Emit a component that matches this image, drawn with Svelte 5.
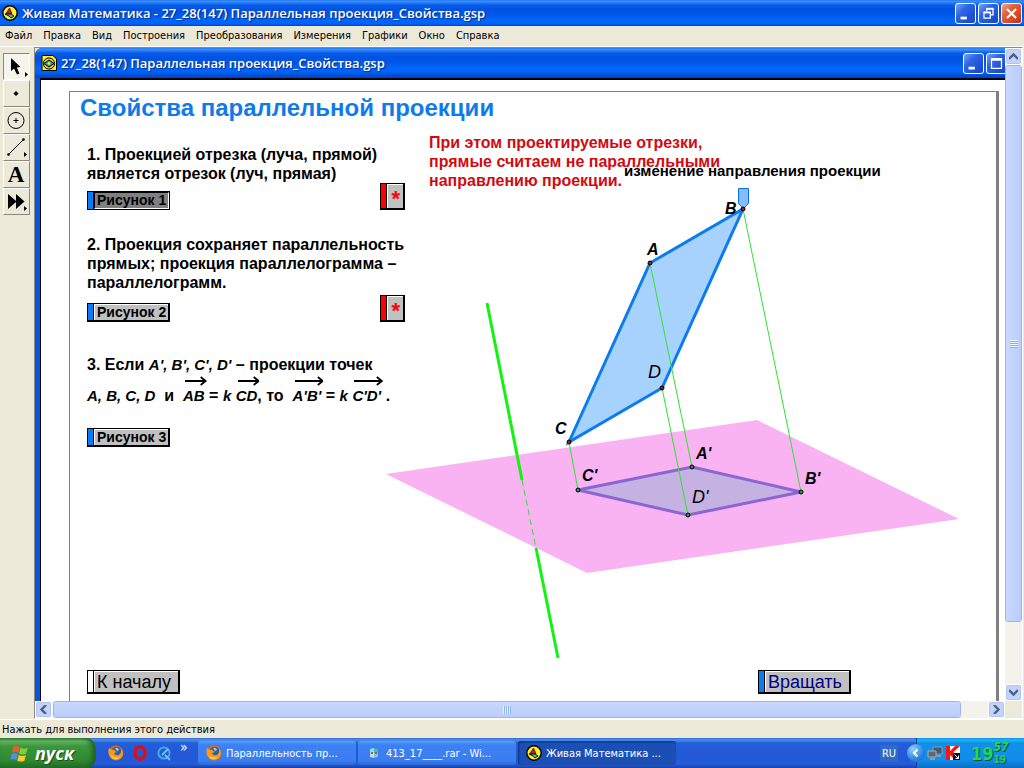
<script>
  const fileName = "27_28(147) Параллельная проекция_Свойства.gsp";

  const menu = [
    "Файл",
    "Правка",
    "Вид",
    "Построения",
    "Преобразования",
    "Измерения",
    "Графики",
    "Окно",
    "Справка",
  ];

  const tools = [
    { id: "arrow", label: "Стрелка" },
    { id: "point", label: "Точка" },
    { id: "circle", label: "Окружность" },
    { id: "segment", label: "Отрезок" },
    { id: "text", label: "Текст" },
    { id: "custom", label: "Инструменты пользователя" },
  ];

  let tool = $state("arrow");
  let figure = $state(1);

  // sketch coordinates
  const pts = {
    A: [650, 263],
    B: [743, 209],
    C: [569, 442],
    D: [662, 388],
    A1: [692, 467],
    B1: [801, 492],
    C1: [578, 490],
    D1: [688, 515],
  };

  const labels = [
    { text: "A", x: 647, y: 255 },
    { text: "B", x: 725, y: 214 },
    { text: "C", x: 555, y: 434 },
    { text: "D", x: 648, y: 378, light: true },
    { text: "A'", x: 696, y: 459 },
    { text: "B'", x: 805, y: 484 },
    { text: "C'", x: 582, y: 481 },
    { text: "D'", x: 692, y: 503, light: true },
  ];

  const poly = (...names) => names.map((n) => pts[n].join(",")).join(" ");
</script>

{#snippet appIcon()}
  <svg class="app-icon" viewBox="0 0 16 16" aria-hidden="true">
    <circle cx="8" cy="8" r="7.2" fill="#ffee2a" stroke="#000" stroke-width="1.4" />
    <path d="M7.5 3 L10 8.5 H4 Z" fill="#e01010" stroke="#000" stroke-width=".6" />
    <path d="M3 9 H9 L12 11 L9 13 L7 11 Z" fill="#27c6bb" stroke="#000" stroke-width=".9" />
  </svg>
{/snippet}

{#snippet firefox()}
  <svg class="app-icon" viewBox="0 0 16 16" aria-hidden="true">
    <circle cx="8" cy="8" r="7.4" fill="#e66a10" />
    <circle cx="8.6" cy="6.6" r="4.8" fill="#2d5ea8" />
    <path d="M7 3 Q10 2 11 5 L9 6 Z" fill="#9cd0f4" />
    <path d="M1 3 L4 5 Q7 4 7 6 L9 7 L6 8 Q7 11 11 10 Q14 8 13 3 Q17 9 13 13 Q8 17 3 13 Q-1 9 1 3 Z" fill="#f59a1c" />
    <path d="M3 10 Q6 14 12 12 Q8 16 4 13 Z" fill="#ffd34a" />
  </svg>
{/snippet}

{#snippet chevron(d)}
  <svg viewBox="0 0 9 9" width="9" height="9" aria-hidden="true">
    <path {d} fill="none" stroke="#4d6185" stroke-width="2.4" />
  </svg>
{/snippet}

{#snippet vector(text)}
  <i class="vector">
    <svg viewBox="0 0 30 10" preserveAspectRatio="xMaxYMid slice" aria-hidden="true">
      <path d="M0 5 H29 M24 1 L29 5 L24 9" fill="none" stroke="#000" stroke-width="1.8" />
    </svg>{text}</i>
{/snippet}

<div class="desktop">
  <header class="titlebar">
    {@render appIcon()}
    <h1>Живая Математика - {fileName}</h1>
    <div class="winbtns">
      <button type="button" aria-label="Свернуть">
        <svg viewBox="0 0 21 21"><path d="M5 15.5 H12" stroke="#fff" stroke-width="3" /></svg>
      </button>
      <button type="button" aria-label="Восстановить">
        <svg viewBox="0 0 21 21">
          <path d="M8.5 8 V5.5 H15.5 V12 H13" fill="none" stroke="#fff" stroke-width="1.4" />
          <path d="M8 5.2 H16" stroke="#fff" stroke-width="2" />
          <path d="M5.5 9.5 H12.5 V15.5 H5.5 Z" fill="none" stroke="#fff" stroke-width="1.4" />
          <path d="M5 9.2 H13" stroke="#fff" stroke-width="2" />
        </svg>
      </button>
      <button type="button" class="close" aria-label="Закрыть">
        <svg viewBox="0 0 21 21"><path d="M5.5 5.5 L15.5 15.5 M15.5 5.5 L5.5 15.5" stroke="#fff" stroke-width="2.4" /></svg>
      </button>
    </div>
  </header>

  <nav class="menubar">
    {#each menu as item (item)}
      <button type="button">{item}</button>
    {/each}
  </nav>

  <div class="workspace">
    <div class="toolbox">
      {#each tools as t (t.id)}
        <button
          type="button"
          aria-label={t.label}
          class:active={tool === t.id}
          onclick={() => (tool = t.id)}
        >
          <svg viewBox="0 0 25 25" aria-hidden="true">
            {#if t.id === "arrow"}
              <path d="M7 4 V17 L10 14.5 L13 20.5 L15.4 19.4 L12.8 13.4 L16.5 13 Z" />
              <path d="M21 18 L24 20.5 L21 23 Z" />
            {:else if t.id === "point"}
              <path d="M12 10 L14.6 12.5 L12 15 L9.4 12.5 Z" />
            {:else if t.id === "circle"}
              <circle cx="12" cy="12.5" r="8" fill="none" stroke="#000" />
              <path d="M12 10 V15 M9.5 12.5 H14.5" stroke="#000" />
            {:else if t.id === "segment"}
              <path d="M4.5 19.5 L19.5 4.5" stroke="#000" />
              <circle cx="4.5" cy="19.5" r="1.3" />
              <circle cx="19.5" cy="4.5" r="1.3" />
              <path d="M20 17 L23 19.5 L20 22 Z" />
            {:else if t.id === "text"}
              <text x="12" y="20" text-anchor="middle">A</text>
            {:else}
              <path d="M4 5 L12 12 V5 L20.5 12.5 L12 20 V13 L4 20 Z" />
              <path d="M20 17 L23 19.5 L20 22 Z" />
            {/if}
          </svg>
        </button>
      {/each}
    </div>

    <main class="mdi">
      <section class="child">
        <header class="titlebar inner">
          <svg class="app-icon" viewBox="0 0 16 16" aria-hidden="true">
            <path d="M1 .5 H12 L15.5 4 V15.5 H1 Z" fill="#ffee2a" stroke="#000" />
            <circle cx="8" cy="8.5" r="5.6" fill="#d8d34a" stroke="#000" />
            <path d="M3 8.5 L8 5 L13 8.5 L8 12 Z" fill="#27a69b" stroke="#000" />
            <circle cx="8" cy="8.5" r="1.4" fill="#f6e22b" />
          </svg>
          <h2>{fileName}</h2>
          <div class="winbtns">
            <button type="button" aria-label="Свернуть документ">
              <svg viewBox="0 0 21 21"><path d="M5 15.5 H12" stroke="#fff" stroke-width="3" /></svg>
            </button>
            <button type="button" aria-label="Развернуть документ">
              <svg viewBox="0 0 21 21">
                <path d="M5 5.5 H16 V16 H5 Z" fill="none" stroke="#fff" stroke-width="1.4" />
                <path d="M4.4 6 H16.6" stroke="#fff" stroke-width="3" />
              </svg>
            </button>
          </div>
        </header>

        <div class="canvas">
          <div class="paper">
            <svg class="figure" viewBox="70 92 926 609" width="926" height="609" aria-label="Параллельная проекция">
              <polygon points="386,474 757,420 959,519 587,573" fill="#f9b3f2" />
              <polygon points={poly("A", "B", "D", "C")} fill="#a8d2fe" stroke="#0a7cf0" stroke-width="3" />
              <polygon points={poly("A1", "B1", "D1", "C1")} fill="#c6b2e2" stroke="#8a66d2" stroke-width="3" />
              <g stroke="#2ee42e" stroke-width="1">
                {#each ["A", "B", "C", "D"] as n (n)}
                  <line x1={pts[n][0]} y1={pts[n][1]} x2={pts[n + "1"][0]} y2={pts[n + "1"][1]} />
                {/each}
              </g>
              <g stroke="#12f312" stroke-width="3">
                <path d="M487 303 L522 480 M536 548 L558 658" />
                <path d="M522 480 L536 548" stroke="#3fd63f" stroke-width="1" stroke-dasharray="6 4" />
              </g>
              <path d="M738.500 188.500 H748.500 V203.500 L743.500 208.500 L738.500 203.500 Z" fill="#84bcff" stroke="#0a6fe0" />
              {#each Object.entries(pts) as [name, [x, y]] (name)}
                <circle cx={x} cy={y} r="2" fill={name.length > 1 ? "#1fa02c" : "#b0101c"} stroke="#000" />
              {/each}
              {#each labels as l (l.text)}
                <text x={l.x} y={l.y} class:light={l.light}>{l.text}</text>
              {/each}
            </svg>

            <p class="note">
              При этом проектируемые отрезки,<br />
              прямые считаем не параллельными<br />
              направлению проекции.
            </p>
            <p class="caption">изменение направления проекции</p>

            <h3>Свойства параллельной проекции</h3>

            <article>
              <p>1. Проекцией отрезка (луча, прямой)<br />является отрезок (луч, прямая)</p>
              <div class="row">
                <button type="button" class="action" class:pressed={figure === 1} onclick={() => (figure = 1)}>
                  <span>Рисунок 1</span>
                </button>
                <button type="button" class="action star"><span>*</span></button>
              </div>
            </article>

            <article>
              <p>2. Проекция сохраняет параллельность<br />прямых; проекция параллелограмма –<br />параллелограмм.</p>
              <div class="row">
                <button type="button" class="action" class:pressed={figure === 2} onclick={() => (figure = 2)}>
                  <span>Рисунок 2</span>
                </button>
                <button type="button" class="action star"><span>*</span></button>
              </div>
            </article>

            <article class="vectors">
              <p>3. Если <i>A', B', C', D'</i> – проекции точек</p>
              <p>
                <i>A, B, C, D</i>&nbsp; и &nbsp;{@render vector("AB")} = <i>k</i> {@render vector("CD")}, то &nbsp;{@render vector("A'B'")} = <i>k</i> {@render vector("C'D'")} .
              </p>
              <div class="row">
                <button type="button" class="action" class:pressed={figure === 3} onclick={() => (figure = 3)}>
                  <span>Рисунок 3</span>
                </button>
              </div>
            </article>

            <footer>
              <button type="button" class="action big home"><span>К началу</span></button>
              <button type="button" class="action big rotate"><span>Вращать</span></button>
            </footer>
          </div>
        </div>
      </section>

      <div class="scroll vertical">
        <button type="button" aria-label="Вверх">{@render chevron("M0 7 L4.5 2.500 L9 7")}</button>
        <div class="track">
          <div class="thumb"><span class="grip"></span></div>
        </div>
        <button type="button" aria-label="Вниз">{@render chevron("M0 2 L4.5 6.500 L9 2")}</button>
      </div>

      <div class="scroll horizontal">
        <button type="button" aria-label="Влево">{@render chevron("M7 0 L2.500 4.500 L7 9")}</button>
        <div class="track">
          <div class="thumb"><span class="grip"></span></div>
        </div>
        <button type="button" aria-label="Вправо">{@render chevron("M2 0 L6.500 4.500 L2 9")}</button>
      </div>
    </main>
  </div>

  <div class="status">Нажать для выполнения этого действия</div>

  <footer class="taskbar">
    <button type="button" class="start">
      <svg viewBox="0 0 20 20" aria-hidden="true">
        <path d="M3.500 3 Q7 1 10 3.500 L8.500 9.500 Q5.500 7.500 2 9 Z" fill="#f0592a" />
        <path d="M11 4 Q14.500 6 18.500 4 L17 10 Q13 12 9.500 10 Z" fill="#7fd03c" />
        <path d="M1.700 10.500 Q5 8.800 8.200 11 L6.700 17 Q3.500 15 .2 16.500 Z" fill="#4e8ef5" />
        <path d="M9.200 11.500 Q13 13.500 16.700 11.500 L15.200 17.500 Q11.500 19.500 7.700 17.500 Z" fill="#fbc92a" />
      </svg>
      пуск
    </button>

    <div class="quick">
      {@render firefox()}
      <svg class="app-icon" viewBox="0 0 16 16" aria-hidden="true">
        <ellipse cx="8" cy="8" rx="5" ry="6.200" fill="none" stroke="#d8101c" stroke-width="3.600" />
      </svg>
      <svg class="app-icon" viewBox="0 0 16 16" aria-hidden="true">
        <circle cx="8" cy="8" r="5.600" fill="#1b62c8" stroke="#49a4ee" stroke-width="2" />
        <path d="M6 10 L12 4 M9 10 L14 15" stroke="#6fc3f5" stroke-width="1.800" />
      </svg>
      <span>»</span>
    </div>

    <div class="tasks">
      <button type="button">{@render firefox()}Параллельность пр...</button>
      <button type="button">
        <svg class="app-icon" viewBox="0 0 16 16" aria-hidden="true">
          <path d="M4 4 L8 3 V8 H4 Z" fill="#8fe0e8" />
          <path d="M8 3 L12 4 V8 H8 Z" fill="#4ab6b0" />
          <path d="M4 8 H8 V13 L4 12 Z" fill="#c5dce8" />
          <path d="M8 8 H12 V12 L8 13 Z" fill="#74c7dc" />
          <path d="M5 7 H7 V9 H5 Z M9 7 H11 V9 H9 Z" fill="#c8503c" />
        </svg>413_17____.rar - Wi...
      </button>
      <button type="button" class="current">{@render appIcon()}Живая Математика ...</button>
    </div>

    <span class="lang">RU</span>

    <div class="tray">
      <button type="button" class="expand" aria-label="Показать значки">
        <svg viewBox="0 0 18 18" aria-hidden="true">
          <path d="M10.500 5.500 L7 9 L10.500 12.500" fill="none" stroke="#fff" stroke-width="2" />
        </svg>
      </button>
      <svg class="app-icon" viewBox="0 0 16 16" aria-hidden="true">
        <path d="M6 2 H15 V9 H6 Z" fill="#4b5763" stroke="#8b98a2" />
        <path d="M1 6 H9 V12 H1 Z" fill="#5d6a74" stroke="#a3adb5" />
        <path d="M3 14 H8 M10 11 H14" stroke="#9aa6ae" stroke-width="1.600" />
      </svg>
      <svg class="app-icon" viewBox="0 0 16 16" aria-hidden="true">
        <path d="M1 1 H15 V15 H1 Z" fill="#fff" />
        <path d="M1 1 H5 V6 L10 1 H15 L8.500 7 L15 15 H10 L5 10 V15 H1 Z" fill="#f01818" />
        <path d="M8 8 H15 V15 H8 Z" fill="#101010" />
        <path d="M9.500 9.500 L13.500 13.500 M13.500 10.500 V13.500 H10.500" fill="none" stroke="#fff" />
      </svg>
      <time>19<span>57<small>19</small></span></time>
    </div>
  </footer>
</div>

<style>
  :global(body) {
    margin: 0;
    background: #ece9d8;
  }
  .desktop {
    display: flex;
    flex-direction: column;
    min-height: 100vh;
    font-family: "DejaVu Sans Condensed", Tahoma, sans-serif;
    font-size: 11px;
    color: #000;
    background: #ece9d8;
  }
  button {
    margin: 0;
    padding: 0;
    border: none;
    background: none;
    font: inherit;
    color: inherit;
  }
  svg {
    display: block;
  }
  h1,
  h2,
  h3,
  p {
    margin: 0;
  }
  .app-icon {
    width: 16px;
    height: 16px;
    flex: none;
  }

  /* title bars */
  .titlebar {
    display: flex;
    align-items: center;
    gap: 4px;
    height: 26px;
    padding: 0 2px;
    background: linear-gradient(#1b6cf2 0, #3d95ff 1px, #0a5cea 5px, #0053e1 9px, #0055e5 14px, #0066ff 20px, #0063f7 24px, #0041c0 100%);
    color: #fff;
  }
  .titlebar h1,
  .titlebar h2 {
    flex: 1;
    font-family: "Open Sans", sans-serif;
    font-size: 13px;
    line-height: 20px;
    font-weight: 600;
    white-space: nowrap;
    text-shadow: 1px 1px 1px #0a2a80;
  }
  .titlebar.inner {
    height: 30px;
    padding: 0 0 0 6px;
    border-top-left-radius: 7px;
  }
  .winbtns {
    display: flex;
    gap: 2px;
  }
  .inner .winbtns {
    margin-right: -2px;
  }
  .winbtns button {
    box-sizing: border-box;
    width: 21px;
    height: 21px;
    border: 1px solid #fff;
    border-radius: 3px;
    background: linear-gradient(135deg, #7ba4f5 0, #2f66e4 35%, #1c4fd8 75%, #1b45c0 100%);
  }
  .winbtns .close {
    background: linear-gradient(135deg, #f3a68c 0, #e2603c 35%, #d8431c 75%, #b03210 100%);
  }

  .menubar {
    display: flex;
    gap: 11px;
    height: 20px;
    padding: 0 5px;
    border-bottom: 1px solid #fff;
    line-height: 18px;
  }

  /* work area */
  .workspace {
    flex: 1;
    display: flex;
  }
  .toolbox {
    display: flex;
    flex-direction: column;
    width: 34px;
    padding: 6px 0 0 3px;
    box-sizing: border-box;
    flex: none;
  }
  .toolbox button {
    box-sizing: border-box;
    width: 27px;
    height: 27px;
    border: 1px solid;
    border-color: #fff #8d8a7c #8d8a7c #fff;
  }
  .toolbox button.active {
    border-color: #8d8a7c #fff #fff #8d8a7c;
    background: #f6f4ec;
  }
  .toolbox text {
    font-family: "Liberation Serif", serif;
    font-size: 23px;
    font-weight: 700;
  }
  .mdi {
    flex: 1;
    display: grid;
    grid-template: 1fr 17px / 1fr 17px;
    min-width: 0;
    margin-right: 1px;
    border: 1px solid;
    border-color: #8d8a7c #fff #fff #8d8a7c;
    background: #ece9d8;
  }
  .child {
    display: flex;
    flex-direction: column;
    min-width: 0;
    overflow: hidden;
    border-top-left-radius: 7px;
    background: #0855dd;
  }
  .canvas {
    flex: 1;
    display: flex;
    margin-left: 5px;
    padding: 11px 6px 0 28px;
    border-top: 2px solid #000;
    border-left: 1px solid #000;
    background: #fff;
  }
  .paper {
    position: relative;
    flex: 1;
    display: flex;
    flex-direction: column;
    min-width: 0;
    padding: 0 0 7px 17px;
    border: 0 solid #808080;
    border-width: 1px 3px 0 1px;
    font-family: "Liberation Sans", Arial, sans-serif;
    font-size: 16px;
    line-height: 19px;
    font-weight: 700;
  }

  /* sketch */
  .figure {
    position: absolute;
    top: 0;
    left: 0;
  }
  .figure text {
    font-size: 16px;
    font-style: italic;
  }
  .figure text.light {
    font-size: 18px;
    font-weight: 400;
  }
  .note {
    position: absolute;
    top: 41px;
    left: 359px;
    color: #d20a10;
    white-space: nowrap;
  }
  .caption {
    position: absolute;
    top: 69px;
    left: 554px;
    font-size: 15px;
    white-space: nowrap;
  }
  h3 {
    margin-left: -7px;
    font-size: 24px;
    line-height: 32px;
    color: #0f7bea;
  }
  article {
    position: relative;
    width: 318px;
    margin-bottom: 25px;
    white-space: nowrap;
  }
  article i {
    font-size: 15px;
  }
  .row {
    display: flex;
    justify-content: space-between;
    align-items: flex-end;
    height: 30px;
  }
  h3 + article {
    margin-top: 21px;
  }
  h3 + article .row {
    height: 27px;
  }
  .vectors {
    margin-top: 8px;
  }
  .vectors p + p {
    margin-top: 12px;
  }
  .vectors .row {
    height: 42px;
  }
  .vector {
    position: relative;
    display: inline-block;
  }
  .vector svg {
    position: absolute;
    top: -10px;
    left: 2px;
    width: 100%;
    height: 10px;
  }
  .action {
    display: flex;
    border: 1px solid #000;
    border-right-width: 2px;
    border-bottom-width: 2px;
    background: #c0c0c0;
    font-size: 14px;
    line-height: 15px;
  }
  .action::before {
    content: "";
    width: 5px;
    border-right: 1px solid #000;
    background: #0a7cf5;
  }
  .action span {
    padding: 0 2px;
    border-top: 1px solid #fff;
    border-left: 1px solid #fff;
  }
  .action.pressed {
    border-width: 1px;
    background: #808080;
  }
  .action.pressed span {
    border: 1px solid #fff;
    border-top-color: #000;
    border-left-color: #000;
  }
  .action.star::before {
    background: #f00;
  }
  .action.star span {
    padding: 4px 3px 0;
    font-size: 22px;
    line-height: 19px;
    color: #f00;
  }
  .action.big {
    font-size: 18px;
    line-height: 20px;
    font-weight: 400;
  }
  .action.big span {
    padding: 0 7px 0 2px;
  }
  .action.home::before {
    background: #fff;
  }
  .action.rotate {
    color: #000080;
  }
  footer {
    display: flex;
  }
  .paper footer {
    position: relative;
    justify-content: space-between;
    margin-top: auto;
    padding-right: 145px;
  }

  /* scrollbars */
  .scroll {
    display: flex;
    background: #f3f2ec;
  }
  .scroll.vertical {
    flex-direction: column;
  }
  .scroll button {
    display: grid;
    place-items: center;
    box-sizing: border-box;
    flex: none;
    width: 17px;
    height: 17px;
    border: 1px solid #fff;
    border-radius: 3px;
    background: #c3d3fb;
    box-shadow: inset 0 0 0 1px #b0c4f0;
  }
  .track {
    flex: 1;
    display: flex;
    flex-direction: inherit;
  }
  .thumb {
    display: grid;
    place-items: center;
    box-sizing: border-box;
    border: 1px solid #fff;
    border-radius: 3px;
    outline: 1px solid #9fb5e6;
    outline-offset: -1px;
  }
  .vertical .thumb {
    width: 17px;
    height: 90%;
    background: linear-gradient(90deg, #cad8fe, #b9cdfb);
  }
  .horizontal .thumb {
    width: 97%;
    height: 17px;
    margin-left: 1px;
    background: linear-gradient(#cad8fe, #b9cdfb);
  }
  .grip {
    width: 8px;
    height: 8px;
  }
  .vertical .grip {
    background: repeating-linear-gradient(#eef4fe 0 1px, #8cb0f8 1px 2px);
  }
  .horizontal .grip {
    background: repeating-linear-gradient(90deg, #eef4fe 0 1px, #8cb0f8 1px 2px);
  }

  .status {
    height: 18px;
    padding-left: 2px;
    border-top: 1px solid #fff;
    line-height: 20px;
  }

  /* taskbar */
  .taskbar {
    align-items: stretch;
    height: 30px;
    background: linear-gradient(#3168d5 0, #4993e6 2px, #245ddb 5px, #2257d5 20px, #245ddb 26px, #1941a5 100%);
    color: #fff;
  }
  .start {
    display: flex;
    align-items: center;
    gap: 6px;
    box-sizing: border-box;
    width: 96px;
    padding-left: 10px;
    border-radius: 0 10px 10px 0;
    background: linear-gradient(#388a38 0, #68b868 3px, #3c973c 8px, #2f8a2f 22px, #22702a 100%);
    box-shadow: inset -4px 0 5px #1d6424;
    font-family: "Open Sans", sans-serif;
    font-size: 18px;
    font-weight: 700;
    font-style: italic;
    text-shadow: 1px 1px 1px #1a4a1a;
  }
  .start svg {
    width: 19px;
    height: 19px;
  }
  .quick {
    display: flex;
    align-items: center;
    gap: 8px;
    width: 90px;
    padding-left: 12px;
  }
  .quick span {
    align-self: flex-start;
    font-size: 14px;
    line-height: 18px;
  }
  .tasks {
    flex: 1;
    display: flex;
    align-items: center;
    gap: 2px;
  }
  .tasks button {
    display: flex;
    align-items: center;
    gap: 4px;
    box-sizing: border-box;
    flex: 0 1 158px;
    height: 24px;
    padding-left: 8px;
    border-radius: 3px;
    background: linear-gradient(#5a9bff 0, #3c81f3 4px, #3a7df0 20px, #2e66d8 100%);
    white-space: nowrap;
  }
  .tasks button.current {
    background: #1c4fb4;
    box-shadow: inset 1px 1px 2px #0e3080;
  }
  .lang {
    align-self: center;
    margin-right: 18px;
    padding: 2px;
    background: #316ac5;
  }
  .tray {
    display: flex;
    align-items: center;
    gap: 2px;
    box-sizing: border-box;
    width: 108px;
    border-left: 1px solid #0d3f9c;
    background: linear-gradient(#0d8be8 0, #19b9f3 2px, #1290e8 5px, #0f8dea 22px, #0c6cc4 100%);
  }
  .expand {
    flex: none;
    width: 18px;
    height: 18px;
    margin-left: -10px;
    border-radius: 9px;
    background: radial-gradient(circle at 6px 5px, #8fd0ff, #2b83e0 60%, #1560c0);
  }
  .tray time {
    display: flex;
    align-items: center;
    margin-left: 8px;
    font-family: "DejaVu Sans Condensed", sans-serif;
    font-size: 18px;
    font-weight: 700;
    color: #1fd85a;
    text-shadow: 1px 1px 0 #0a4a3c;
  }
  .tray time span {
    display: flex;
    flex-direction: column;
    font-size: 12px;
    line-height: 14px;
    font-style: italic;
  }
  .tray time small {
    font-size: 10px;
    line-height: 12px;
    font-style: normal;
  }
</style>
